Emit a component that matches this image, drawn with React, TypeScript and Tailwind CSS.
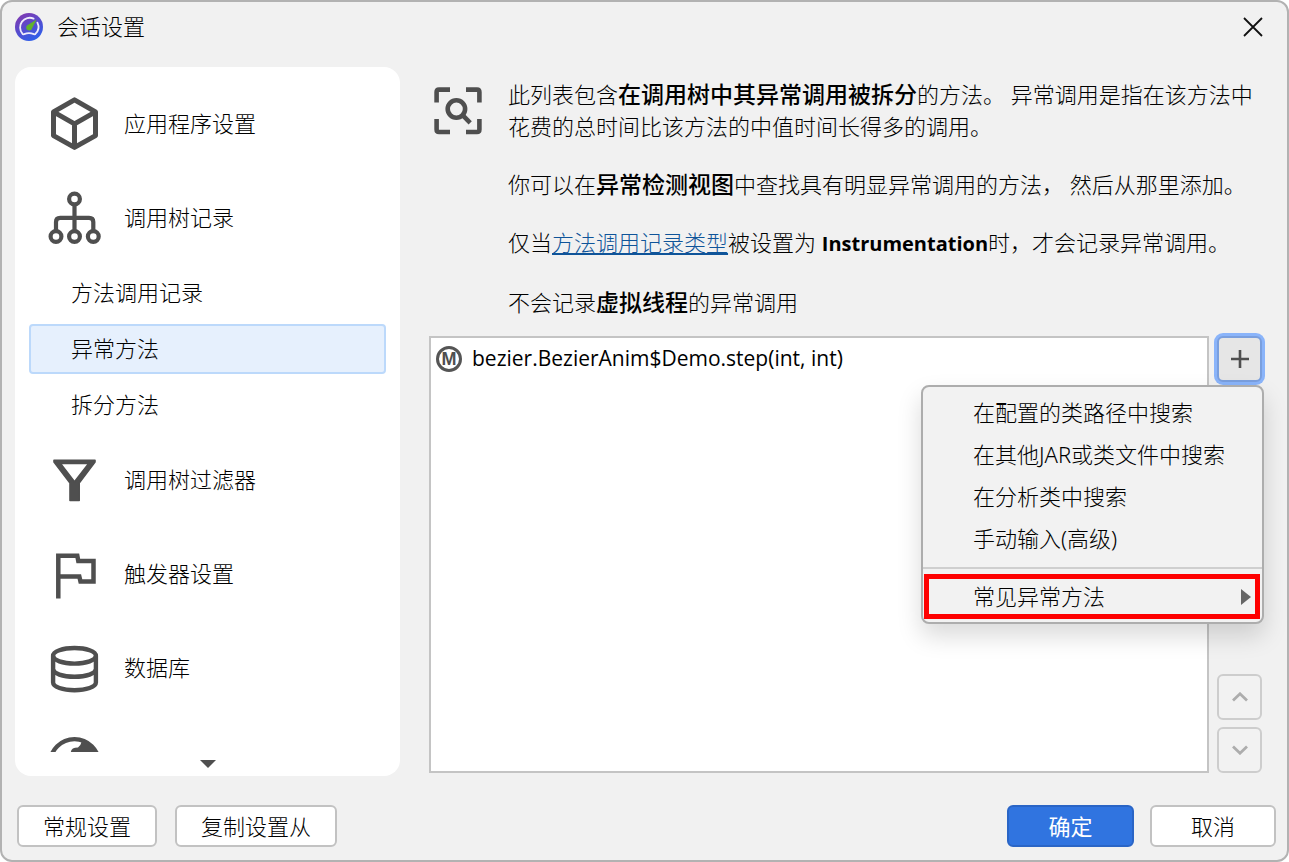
import type { ReactNode } from "react";

const AppLogo = () => (
  <svg className="size-7" viewBox="0 0 28 28" fill="none">
    <defs>
      <linearGradient id="logo" x1="6" y1="2" x2="20" y2="28" gradientUnits="userSpaceOnUse">
        <stop stopColor="#7c3bb4" />
        <stop offset="1" stopColor="#2b60ec" />
      </linearGradient>
    </defs>
    <circle cx="14" cy="14" r="14" fill="url(#logo)" />
    <path
      d="M18.6 5.6A9.6 9.6 0 0 0 7.4 20.6Q7.8 21.6 9.2 21.2 14 19.2 18.8 21.2 20.2 21.6 20.6 20.6A9.6 9.6 0 0 0 22.4 9.6"
      stroke="#eeecfb"
      strokeWidth="1.8"
      strokeLinecap="round"
    />
    <path d="M21.6 6.6 17 15.4A3 3 0 1 1 12 12.4Z" fill="#62b32c" />
  </svg>
);

const CubeIcon = () => (
  <svg className="size-[54px]" viewBox="0 0 54 54" fill="none" stroke="#4f4f4f" strokeWidth="5" strokeLinejoin="round">
    <path d="M26.5 2.8 47.5 14.8V38.6L26.5 50.4 5.5 38.6V14.8Z" />
    <path d="M5.5 14.8 26.5 26.8 47.5 14.8M26.5 26.8V50.4" />
  </svg>
);

const TreeIcon = () => (
  <svg className="size-[54px]" viewBox="0 0 54 54" fill="none" stroke="#4f4f4f" strokeWidth="4.2">
    <circle cx="26.5" cy="8" r="5.4" />
    <circle cx="8" cy="45.5" r="5.4" />
    <circle cx="26.5" cy="45.5" r="5.4" />
    <circle cx="45.3" cy="45.5" r="5.4" />
    <path d="M26.5 13.4V40M8 40V31Q8 26.8 12.2 26.8H41Q45.3 26.8 45.3 31V40" />
  </svg>
);

const FilterIcon = () => (
  <svg className="size-[54px]" viewBox="0 0 54 54" fill="#4f4f4f" stroke="#4f4f4f" strokeWidth="1.6" strokeLinejoin="round">
    <path fillRule="evenodd" d="M6 7.3H47V9L31.2 30V47.5H22V30L6 9ZM12.5 10.5 26.5 28.8 40.7 10.5Z" />
  </svg>
);

const FlagIcon = () => (
  <svg className="size-[54px]" viewBox="0 0 54 54" fill="none" stroke="#4f4f4f" strokeWidth="4.5">
    <path d="M10.3 51.5V8.8H29.3L30.3 14.1H45.5V34.5H32.5L31.3 29.5H10.3" />
  </svg>
);

const DatabaseIcon = () => (
  <svg className="size-[54px]" viewBox="0 0 54 54" fill="none" stroke="#4f4f4f" strokeWidth="4.4">
    <ellipse cx="26.5" cy="14.8" rx="21.4" ry="7.8" />
    <path d="M5.1 14.8V41.6C5.1 45.9 14.7 49.2 26.5 49.2S47.9 45.9 47.9 41.6V14.8" />
    <path d="M5.1 28.1C5.1 32.4 14.7 35.8 26.5 35.8S47.9 32.4 47.9 28.1" />
  </svg>
);

const GlobeIcon = () => (
  <svg className="size-[54px]" viewBox="0 0 54 54" fill="none" stroke="#4f4f4f" strokeWidth="4.4">
    <circle cx="26.5" cy="28.5" r="24.4" />
    <path d="M32 6 33.5 7Q33 10 30 12.6 23.4 12.6 22.8 17L34 30 49 28Q49 12 36 6Z" fill="#4f4f4f" stroke="none" />
  </svg>
);

const InspectIcon = () => (
  <svg className="size-12 shrink-0" viewBox="0 0 48 48" fill="none" stroke="#4f4f4f" strokeWidth="4.6">
    <path d="M2.6 15.5V5Q2.6 2.6 5 2.6H16M32 2.6H43Q45.4 2.6 45.4 5V15.5M45.4 32V42.6Q45.4 45 43 45H32M16 45H5Q2.6 45 2.6 42.6V32" />
    <circle cx="22.4" cy="22" r="8.7" />
    <path d="M28.6 28.2 36.2 35.8" />
  </svg>
);

function NavItem({ icon, children }: { icon: ReactNode; children: ReactNode }) {
  return (
    <button className="flex h-[94px] w-full shrink-0 items-center gap-[22px] pl-[33px] text-left">
      {icon}
      <span className="pb-0.5">{children}</span>
    </button>
  );
}

function SubItem({ active, children }: { active?: boolean; children: ReactNode }) {
  return (
    <button
      className={`mx-3.5 my-[3px] h-[50px] shrink-0 rounded border-2 pb-0.5 pl-10 text-left ${
        active ? "border-[#bcd9fb] bg-[#e6f0fd]" : "border-transparent"
      }`}
    >
      {children}
    </button>
  );
}

const footerButton = "h-[42px] rounded-md border-2 border-[#c2c2c2] bg-white";
const moveButton = "flex h-[46px] w-[45px] items-center justify-center rounded-md border-2 border-[#cdcdcd] bg-[#f2f2f2]";
const menuItems = ["在配置的类路径中搜索", "在其他JAR或类文件中搜索", "在分析类中搜索", "手动输入(高级)"];

export default function App() {
  return (
    <div className="flex h-screen flex-col rounded-xl border-2 border-[#b2b2b2] bg-[#f1f1f1] font-['Noto_Sans','Noto_Sans_CJK_SC',sans-serif] text-[22px] font-light text-black">
      <header className="flex h-[50px] shrink-0 items-center pr-6 pl-[13px]">
        <AppLogo />
        <h1 className="ml-3.5 pb-0.5">会话设置</h1>
        <button aria-label="关闭" className="ml-auto">
          <svg className="size-5" viewBox="0 0 20 20" stroke="#111" strokeWidth="1.8">
            <path d="M1 1 19 19M19 1 1 19" />
          </svg>
        </button>
      </header>

      <div className="flex min-h-0 flex-1 pt-[15px] pl-[13px]">
        <nav className="flex w-[385px] shrink-0 flex-col rounded-2xl bg-white pt-2.5">
          <div className="flex min-h-0 flex-1 flex-col overflow-hidden">
            <NavItem icon={<CubeIcon />}>应用程序设置</NavItem>
            <NavItem icon={<TreeIcon />}>调用树记录</NavItem>
            <SubItem>方法调用记录</SubItem>
            <SubItem active>异常方法</SubItem>
            <SubItem>拆分方法</SubItem>
            <NavItem icon={<FilterIcon />}>调用树过滤器</NavItem>
            <NavItem icon={<FlagIcon />}>触发器设置</NavItem>
            <NavItem icon={<DatabaseIcon />}>数据库</NavItem>
            <NavItem icon={<GlobeIcon />}>{null}</NavItem>
          </div>
          <button aria-label="向下滚动" className="flex h-6 shrink-0 items-center justify-center">
            <svg className="h-2 w-4" viewBox="0 0 16 8" fill="#4f4f4f">
              <path d="M0 0H16L8 8Z" />
            </svg>
          </button>
        </nav>

        <main className="flex min-w-0 flex-1 flex-col pr-[25px] pb-[3px] pl-[29px]">
          <div className="flex gap-[26px] pt-[11px] pl-[5px]">
            <div className="pt-[9px]">
              <InspectIcon />
            </div>
            <div className="space-y-[26px] leading-8">
              <p>
                此列表包含<b className="text-[23px] font-medium">在调用树中其异常调用被拆分</b>的方法。 异常调用是指在该方法中花费的总时间比该方法的中值时间长得多的调用。
              </p>
              <p>
                你可以在<b className="text-[23px] font-medium">异常检测视图</b>中查找具有明显异常调用的方法， 然后从那里添加。
              </p>
              <p>
                仅当
                <a href="#recording" className="text-[#0f5499] underline decoration-2 underline-offset-2">方法调用记录类型</a>
                被设置为 <b className="font-['Open_Sans',sans-serif] text-[20px] font-bold">Instrumentation</b>时，才会记录异常调用。
              </p>
              <p>
                不会记录<b className="text-[23px] font-medium">虚拟线程</b>的异常调用
              </p>
            </div>
          </div>

          <div className="mt-[18px] flex min-h-0 flex-1 gap-2">
            <ul className="min-w-0 flex-1 border-2 border-[#c4c4c4] bg-white">
              <li className="flex h-[42px] items-center gap-2.5 pl-[5px] font-['Open_Sans',sans-serif] text-[21px] font-normal">
                <span className="flex size-[26px] items-center justify-center rounded-full border-[3px] border-[#555] font-['Liberation_Sans',sans-serif] text-lg leading-none font-bold text-[#4f4f4f]">
                  M
                </span>
                bezier.BezierAnim$Demo.step(int, int)
              </li>
            </ul>

            <div className="relative flex flex-col justify-between">
              <button
                aria-label="添加"
                aria-haspopup="menu"
                className="flex h-[46px] w-[45px] items-center justify-center rounded-md border-2 border-[#7a9fde] bg-[#e6e6e6] ring-3 ring-[#8ab4fa]"
              >
                <svg className="size-5" viewBox="0 0 20 20" stroke="#4f4f4f" strokeWidth="2.6">
                  <path d="M10 1V19M1 10H19" />
                </svg>
              </button>

              <div className="flex flex-col gap-[7px]">
                <button aria-label="上移" disabled className={moveButton}>
                  <svg className="h-2.5 w-4" viewBox="0 0 16 10" fill="none" stroke="#adadad" strokeWidth="2.8">
                    <path d="M1 8.5 8 1.8 15 8.5" />
                  </svg>
                </button>
                <button aria-label="下移" disabled className={moveButton}>
                  <svg className="h-2.5 w-4" viewBox="0 0 16 10" fill="none" stroke="#adadad" strokeWidth="2.8">
                    <path d="M1 1.5 8 8.2 15 1.5" />
                  </svg>
                </button>
              </div>

              <div
                role="menu"
                className="absolute top-[49px] -right-0.5 w-[343px] rounded-lg border-2 border-[#adadad] bg-[#f2f2f2] pt-1 pb-[3px] shadow-[0_12px_24px_rgba(0,0,0,0.15)]"
              >
                {menuItems.map((label) => (
                  <button key={label} role="menuitem" className="block h-[42px] w-full pl-[50px] text-left">
                    {label}
                  </button>
                ))}
                <hr className="mt-2 mb-[5px] border-t-2 border-[#cfcfcf]" />
                <button
                  role="menuitem"
                  aria-haspopup="menu"
                  className="mx-px flex h-[45px] w-[336px] items-center justify-between border-5 border-[#fe0000] pr-1 pl-11 text-left"
                >
                  常见异常方法
                  <svg className="h-4 w-2.5" viewBox="0 0 10 16" fill="#666">
                    <path d="M0 0 10 8 0 16Z" />
                  </svg>
                </button>
              </div>
            </div>
          </div>
        </main>
      </div>

      <footer className="flex shrink-0 items-center pt-[29px] pr-[11px] pb-[13px] pl-[15px]">
        <button className={`w-[140px] ${footerButton}`}>常规设置</button>
        <button className={`ml-[18px] w-[162px] ${footerButton}`}>复制设置从</button>
        <button className="ml-auto h-[42px] w-[127px] rounded-md border-2 border-[#2a65c6] bg-[#3074e0] font-normal text-white">
          确定
        </button>
        <button className={`ml-4 w-[126px] ${footerButton}`}>取消</button>
      </footer>
    </div>
  );
}
